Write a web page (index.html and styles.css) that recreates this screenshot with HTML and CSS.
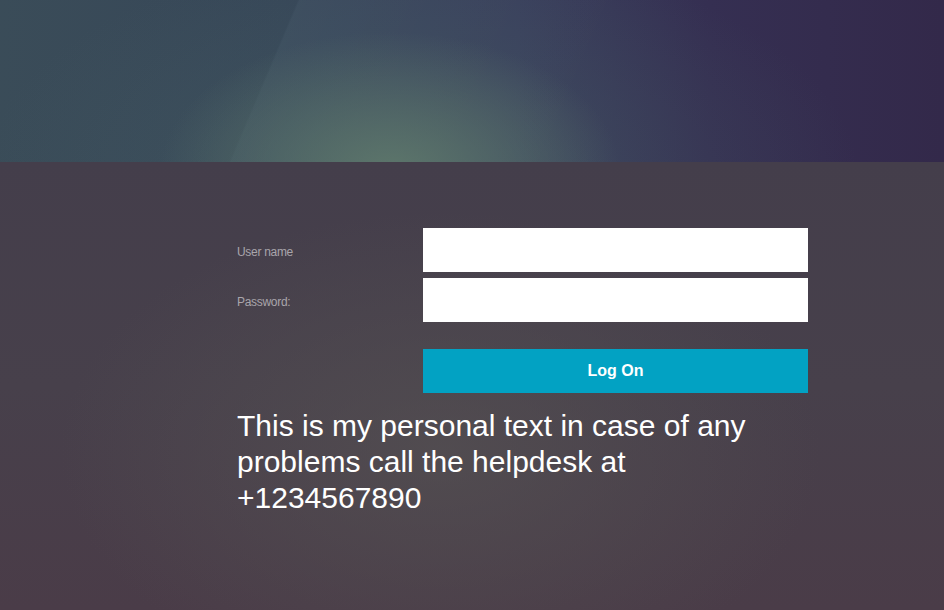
FILE: index.html
```html
<!DOCTYPE html>
<html>
<head>
<meta charset="utf-8">
<link rel="stylesheet" href="styles.css">
</head>
<body>
<div class="page">
  <div class="hero"></div>
  <div class="panel">
    <form class="login">
      <label class="label">User name</label>
      <input class="field" type="text">
      <label class="label">Password:</label>
      <input class="field" type="password">
      <button class="logon" type="button">Log On</button>
    </form>
    <p class="note">This is my personal text in case of any problems call the helpdesk at +1234567890</p>
  </div>
</div>
</body>
</html>
```
FILE: styles.css
```css
html, body {
  margin: 0;
  padding: 0;
  height: 100%;
}
body {
  font-family: "Liberation Sans", Arial, sans-serif;
  background: #453f4b;
  overflow: hidden;
}
.page {
  width: 944px;
  height: 610px;
  display: flex;
  flex-direction: column;
}
.hero {
  height: 162px;
  flex: none;
  background:
    radial-gradient(ellipse 230px 140px at 390px 172px, rgba(96,122,108,0.9), rgba(96,122,108,0) 100%),
    radial-gradient(ellipse 440px 230px at 420px 180px, rgba(70,95,100,0.5), rgba(70,95,100,0) 100%),
    linear-gradient(113deg, rgba(0,0,0,0.04) 0, rgba(0,0,0,0.04) 274px, rgba(255,255,255,0.02) 276px, rgba(255,255,255,0) 600px),
    linear-gradient(90deg, #3c4f5c 0%, #394a5c 30%, #393f5c 55%, #352f52 75%, #33294a 100%);
}
.panel {
  flex: 1;
  background:
    radial-gradient(ellipse 380px 240px at 440px 290px, rgba(84,80,82,0.75), rgba(84,80,82,0) 100%),
    linear-gradient(180deg, #443e4b 0%, #47404b 50%, #4a3c48 100%);
  padding: 66px 0 0 237px;
}
.login {
  display: grid;
  grid-template-columns: 186px 385px;
  grid-template-rows: 44px 44px 44px;
  row-gap: 6px;
  align-items: center;
}
.label {
  color: #a9a5ab;
  font-size: 12px;
  letter-spacing: -0.3px;
  padding-top: 3px;
}
.field {
  box-sizing: border-box;
  width: 385px;
  height: 44px;
  border: 0;
  margin: 0;
  background: #ffffff;
  outline: none;
}
.logon {
  grid-column: 2;
  align-self: start;
  margin-top: 21px;
  width: 385px;
  height: 44px;
  border: 0;
  background: #02a2c3;
  color: #ffffff;
  font-family: "Liberation Sans", Arial, sans-serif;
  font-weight: bold;
  font-size: 16px;
  padding: 0;
}
.note {
  margin: 36px 0 0;
  width: 540px;
  color: #ffffff;
  font-size: 30px;
  line-height: 36px;
}
```
